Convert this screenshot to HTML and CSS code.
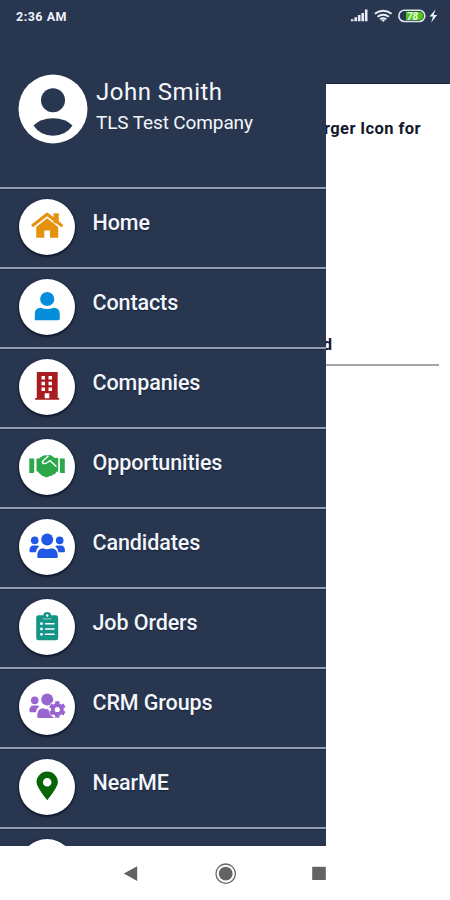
FILE: index.html
```
<!DOCTYPE html>
<html lang="en">
<head>
<meta charset="utf-8">
<title>CRM menu</title>
<link rel="stylesheet" href="styles.css">
</head>
<body>
<div class="phone">
  <header class="appbar"></header>
  <main class="page">
    <p class="hint">rger Icon for</p>
    <p class="field">d</p>
  </main>
  <aside class="drawer">
    <section class="profile">
      <svg class="avatar" viewBox="0 0 70 70"><circle cx="35" cy="35" r="34.5" fill="#fff"/><circle cx="35" cy="26.3" r="12" fill="#28364f"/><path d="M15.500 51.500Q22 44.500 35 44.300Q48 44.500 54.500 51.500Q48 61.500 35 61.800Q22 61.500 15.500 51.500Z" fill="#28364f"/></svg>
      <div class="who"><div class="name">John Smith</div><div class="company">TLS Test Company</div></div>
    </section>
    <nav class="menu">
      <a class="item"><span class="disc"><svg viewBox="0 0 56 56" fill="#e4920f"><path d="M34.500 14.300h5.300v10h-5.300z"/><path d="M14 26.200L28.100 15.200L42.300 26.200" fill="none" stroke="#e4920f" stroke-width="3.200" stroke-linecap="round" stroke-linejoin="round"/><path d="M28.100 19.300L39.200 28V38.800H31V31.500H25.300V38.800H17.200V28Z"/></svg></span><span class="label">Home</span></a>
      <a class="item"><span class="disc"><svg viewBox="0 0 56 56" fill="#078edb"><circle cx="28.200" cy="20" r="7.100"/><path d="M15.800 41.300V35Q15.800 28.700 22 28.700Q28.200 31.200 34.500 28.700Q40.800 28.700 40.800 35V39.500Q40.800 41.300 39 41.300H17.500Z"/></svg></span><span class="label">Contacts</span></a>
      <a class="item"><span class="disc"><svg viewBox="0 0 56 56" fill="#a91d22"><path d="M17.800 13h20.900v26h1.500v1.800h-24V39h1.600z"/><path fill="#fff" d="M22.500 17h3.500v3.500h-3.500zM29.500 17h3.500v3.500h-3.500zM22.500 22.700h3.500v3.500h-3.500zM29.500 22.700h3.500v3.500h-3.500zM22.500 28.400h3.500v3.500h-3.500zM29.500 28.400h3.500v3.500h-3.500zM25.700 34.200h4.600v5h-4.600z"/></svg></span><span class="label">Companies</span></a>
      <a class="item"><span class="disc"><svg viewBox="0 0 56 56" fill="#2ba84a"><path d="M10.300 19.500h4.900v13.200q0 1.300-1.300 1.300h-3.600zM40.900 19.500h4.900V34h-3.600q-1.300 0-1.300-1.300z"/><path d="M17.500 19.500h2.500l3.500-2.500q2-1.300 4.200-.4q2-1 4.200-.3l4.100 2.700h3.200v13.700h-2q-.4 2.900-3 2.700q-1.200 2-3.400 1.300q-2.700 2.800-5.300.7q-2.500-.5-5-3l-2.200-2.100h-.8z"/><path d="M29 17.300l-5 4.400q-1.500 1.600.4 2.500q2 1 4-.7l2.700-1.800l5.900 5.600" fill="none" stroke="#fff" stroke-width="1.500" stroke-linejoin="round" stroke-linecap="round"/></svg></span><span class="label">Opportunities</span></a>
      <a class="item"><span class="disc"><svg viewBox="0 0 56 56" fill="#2157e7"><circle cx="28.200" cy="20.600" r="6"/><circle cx="15.700" cy="21.400" r="3.800"/><circle cx="40.700" cy="21.400" r="3.800"/><path d="M18.200 37.500q0-8.200 6-8.200q4 1.800 8 0q6.600 0 6.600 8.200q0 1.500-1.500 1.500H19.700q-1.500 0-1.500-1.500zM10.400 32q0-5.500 4-5.500h3.500q1.300 0 2.300.8q-2.600 2-3.300 6h-5.300q-1.200 0-1.200-1.300zM46 32q0-5.500-4-5.500h-3.500q-1.300 0-2.300.8q2.600 2 3.300 6h5.300q1.200 0 1.200-1.300z"/></svg></span><span class="label">Candidates</span></a>
      <a class="item"><span class="disc"><svg viewBox="0 0 56 56" fill="#159588"><path d="M19.500 16.200h4.700q.5-3.300 4-3.300t4 3.300h4.700q2.300 0 2.300 2.300v20.400q0 2.300-2.300 2.300H19.500q-2.300 0-2.300-2.300V18.500q0-2.300 2.300-2.300z"/><circle cx="28.200" cy="16.500" r="1.200" fill="#fff"/><path d="M24 19.900h8.500" stroke="#8fd0c9" stroke-width="1"/><g fill="#fff"><circle cx="22.500" cy="24.700" r="1.400"/><circle cx="22.500" cy="30" r="1.400"/><circle cx="22.500" cy="35.300" r="1.400"/></g><path d="M26.500 24.700h8.500M26.500 30h8.500M26.500 35.300h8.500" stroke="#fff" stroke-width="1.500" stroke-linecap="round"/></svg></span><span class="label">Job Orders</span></a>
      <a class="item"><span class="disc"><svg viewBox="0 0 56 56" fill="#9966d1"><circle cx="28.200" cy="20.600" r="6"/><circle cx="15.700" cy="21.400" r="3.800"/><path d="M18.200 37.500q0-8.200 6-8.200q4 1.800 8 0q6.600 0 6.600 8.200q0 1.500-1.500 1.500H19.700q-1.500 0-1.500-1.500zM10.400 32q0-5.500 4-5.500h3.500q1.300 0 2.300.8q-2.600 2-3.300 6h-5.300q-1.200 0-1.200-1.300z"/><circle cx="38.300" cy="30.500" r="8.800" fill="#fff"/><circle cx="38.300" cy="30.500" r="4.500" fill="none" stroke="#9966d1" stroke-width="3.800"/><path d="M38.300 22.200v3.500M38.300 35.300v3.500M31.100 26.350l3 1.750M42.500 32.900l3 1.750M31.100 34.650l3-1.750M42.500 28.100l3-1.750" stroke="#9966d1" stroke-width="4.200"/></svg></span><span class="label">CRM Groups</span></a>
      <a class="item"><span class="disc"><svg viewBox="0 0 56 56" fill="#066606"><path fill-rule="evenodd" d="M28.200 41.300Q17.500 28 17.500 23.300A10.700 10.700 0 0 1 38.900 23.300Q38.900 28 28.200 41.300ZM28.200 19a4.300 4.300 0 1 0 0 8.600a4.300 4.300 0 1 0 0-8.600Z"/></svg></span><span class="label">NearME</span></a>
      <a class="item"><span class="disc"></span></a>
    </nav>
  </aside>
  <div class="status">
    <span class="time">2:36 AM</span>
    <svg class="indicators" viewBox="0 0 90 16" width="90" height="16">
      <path d="M2.200 13.300v-2M5.700 13.300v-4M9.200 13.300V7.100M12.700 13.300V5.100M16.200 13.300V1.500" stroke="#e8edf7" stroke-width="2.600"/>
      <g fill="none" stroke="#e8edf7" stroke-width="1.900"><path d="M24.800 5.700q8.400-6 16.800 0M27.500 8.700q5.700-4 11.400 0M30 11.200q3.200-2.200 6.400 0"/></g><path d="M30.900 11.800l2.300 2.300l2.300-2.300q-2.300-1.300-4.600 0z" fill="#e8edf7"/>
      <rect x="48.800" y="2.300" width="26" height="11.200" rx="5.600" fill="#28364f" stroke="#dfe6e8" stroke-width="1.600"/><path d="M56 3.700h13.200a4.200 4.200 0 0 1 0 8.400H56z" fill="#50c51c"/><text x="57" y="11.700" class="charge">78</text>
      <path d="M85.500 1.500l-6 7h3.500l-1.800 6l6-7.500h-3.500z" fill="#eef3ff"/>
    </svg>
  </div>
  <footer class="keys"><svg viewBox="0 0 450 54" width="450" height="54"><path d="M123.800 27.500L137.200 20.200V35z" fill="#636363"/><circle cx="225.700" cy="27.700" r="9.700" fill="none" stroke="#686868" stroke-width="1.300"/><circle cx="225.700" cy="27.700" r="6.900" fill="#636363"/><path d="M312.200 20.800h13.600v13.200h-13.600z" fill="#636363"/></svg></footer>
</div>
</body>
</html>
```
FILE: styles.css
```
* { box-sizing: border-box; }
body { margin: 0; font-family: Roboto, "Liberation Sans", sans-serif; background: #fff; }
p { margin: 0; }
.phone { position: relative; width: 450px; height: 900px; overflow: hidden; display: flex; flex-direction: column; background: #fff; }
.appbar { flex: 0 0 84px; background: #28364f; border-bottom: 1px solid #17253e; }
.page { flex: 1; padding: 35px 11px 0 324px; color: #14182b; }
.hint { height: 20px; font-size: 16.500px; line-height: 20px; letter-spacing: .4px; font-weight: 700; white-space: nowrap; }
.field { height: 227px; padding-top: 196px; font-size: 16px; line-height: 20px; border-bottom: 2px solid #a6a6a6; font-weight: 700; text-indent: -1px; }
.drawer { position: absolute; left: 0; top: 0; width: 326px; height: 846px; overflow: hidden; background: #28364f; color: #f4f6fb; }
.profile { height: 187px; padding: 74px 0 0 18px; display: flex; gap: 8px; }
.avatar { width: 70px; height: 70px; flex: none; }
.who { white-space: nowrap; }
.name { margin-top: 3px; font-size: 24px; line-height: 30px; letter-spacing: .5px; }
.company { margin-top: 2px; font-size: 19px; line-height: 28px; letter-spacing: -.12px; }
.item { height: 80px; display: flex; gap: 18px; padding: 10px 0 0 18.500px; border-top: 2px solid #929bb0; box-shadow: inset 0 1px #1a2b48; }
.disc { width: 56px; height: 56px; flex: none; border-radius: 50%; background: #fff; box-shadow: 0 1px 2px 1px #111b2e; }
.disc svg { display: block; width: 56px; height: 56px; }
.label { margin-top: 10px; font-size: 21.500px; line-height: 28px; letter-spacing: -.1px; font-weight: 500; white-space: nowrap; text-shadow: 0 1px 1px #14213a; }
.status { position: absolute; left: 0; top: 0; width: 450px; height: 32px; display: flex; justify-content: space-between; align-items: center; padding: 0 10px 0 16px; color: #eef2fa; }
.time { font-size: 12.500px; font-weight: 700; letter-spacing: .5px; }
.charge { font-size: 10px; font-weight: 700; font-style: italic; fill: #edffe5; }
.keys { flex: 0 0 54px; background: #fff; }
.keys svg { display: block; }
```
